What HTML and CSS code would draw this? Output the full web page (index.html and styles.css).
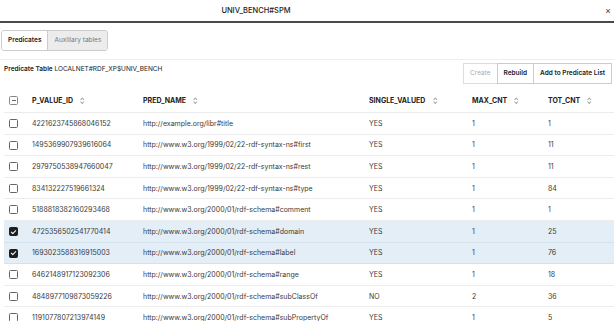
FILE: index.html
```html
<!DOCTYPE html>
<html lang="en">
<head>
    <meta charset="UTF-8">
    <title>UNIV_BENCH#SPM</title>
    <link rel="stylesheet" href="styles.css">
</head>
<body>
    <div class="titlebar">
        <span class="title">UNIV_BENCH#SPM</span>
        <span class="close">&times;</span>
    </div>

    <div class="tabbar">
        <div class="tabs">
            <div class="tab active">Predicates</div>
            <div class="tab">Auxiliary tables</div>
        </div>
    </div>

    <div class="toolbar">
        <div class="table-name"><b>Predicate Table</b> LOCALNET#RDF_XP$UNIV_BENCH</div>
        <div class="actions">
            <div class="btn disabled">Create</div>
            <div class="btn">Rebuild</div>
            <div class="btn">Add to Predicate List</div>
        </div>
    </div>

    <table class="grid">
        <thead>
            <tr>
                <th class="c-check"><span class="box minus"></span></th>
                <th class="c-id">P_VALUE_ID <span class="sort"></span></th>
                <th class="c-name">PRED_NAME <span class="sort"></span></th>
                <th class="c-single">SINGLE_VALUED <span class="sort"></span></th>
                <th class="c-max">MAX_CNT <span class="sort"></span></th>
                <th class="c-tot">TOT_CNT <span class="sort"></span></th>
            </tr>
        </thead>
        <tbody>
            <tr><td class="c-check"><span class="box"></span></td><td>4221623745868046152</td><td>http://example.org/libr#title</td><td>YES</td><td>1</td><td>1</td></tr>
            <tr><td class="c-check"><span class="box"></span></td><td>1495369907939616064</td><td>http://www.w3.org/1999/02/22-rdf-syntax-ns#first</td><td>YES</td><td>1</td><td>11</td></tr>
            <tr><td class="c-check"><span class="box"></span></td><td>2979750538947660047</td><td>http://www.w3.org/1999/02/22-rdf-syntax-ns#rest</td><td>YES</td><td>1</td><td>11</td></tr>
            <tr><td class="c-check"><span class="box"></span></td><td>834132227519661324</td><td>http://www.w3.org/1999/02/22-rdf-syntax-ns#type</td><td>YES</td><td>1</td><td>84</td></tr>
            <tr><td class="c-check"><span class="box"></span></td><td>5188818382160293468</td><td>http://www.w3.org/2000/01/rdf-schema#comment</td><td>YES</td><td>1</td><td>1</td></tr>
            <tr class="selected"><td class="c-check"><span class="box checked"></span></td><td>4725356502541770414</td><td>http://www.w3.org/2000/01/rdf-schema#domain</td><td>YES</td><td>1</td><td>25</td></tr>
            <tr class="selected"><td class="c-check"><span class="box checked"></span></td><td>1693023588316915003</td><td>http://www.w3.org/2000/01/rdf-schema#label</td><td>YES</td><td>1</td><td>76</td></tr>
            <tr><td class="c-check"><span class="box"></span></td><td>6462148917123092306</td><td>http://www.w3.org/2000/01/rdf-schema#range</td><td>YES</td><td>1</td><td>18</td></tr>
            <tr><td class="c-check"><span class="box"></span></td><td>4848977109873059226</td><td>http://www.w3.org/2000/01/rdf-schema#subClassOf</td><td>NO</td><td>2</td><td>36</td></tr>
            <tr><td class="c-check"><span class="box"></span></td><td>1191077807213974149</td><td>http://www.w3.org/2000/01/rdf-schema#subPropertyOf</td><td>YES</td><td>1</td><td>5</td></tr>
        </tbody>
    </table>
</body>
</html>
```

FILE: styles.css
```css
body {
    margin: 0;
    font-family: Inter, "Liberation Sans", sans-serif;
    font-size: 7px;
    color: #3a3a3a;
    background: #fff;
    overflow: hidden;
}

.titlebar {
    position: relative;
    height: 21px;
    line-height: 21px;
    padding-right: 102px;
    text-align: center;
    border-bottom: 2px solid #4a4a4a;
}
.title {
    font-size: 7.5px;
    font-weight: 500;
    color: #222;
}
.close {
    position: absolute;
    right: 3px;
    top: 0;
    font-size: 9px;
    color: #444;
}

.tabbar {
    padding: 7px 0 8px 1px;
    border-bottom: 1px solid #eee;
}
.tabs {
    display: inline-flex;
    border: 1px solid #ccc;
    border-radius: 3px;
    overflow: hidden;
}
.tab {
    height: 19px;
    line-height: 19px;
    padding: 0 6px;
    font-size: 6.5px;
    color: #777;
    background: #ececec;
}
.tab.active {
    background: #fff;
    color: #222;
    font-weight: 600;
    border-right: 1px solid #ccc;
}

.toolbar {
    display: flex;
    justify-content: space-between;
    align-items: flex-start;
    padding: 3px 2px 0 4px;
    height: 25px;
}
.table-name {
    padding-top: 2px;
    font-size: 6.5px;
    color: #222;
}
.table-name b {
    font-weight: 600;
}
.actions {
    display: flex;
}
.btn {
    height: 19px;
    line-height: 19px;
    padding: 0 6px;
    border: 1px solid #ccc;
    margin-left: -1px;
    font-size: 6.5px;
    font-weight: 600;
    color: #222;
    background: #fff;
}
.btn.disabled {
    color: #aaa;
    font-weight: 400;
    border-color: #ddd;
}

.grid {
    margin-left: 4px;
    width: 610px;
    border-collapse: collapse;
    table-layout: fixed;
}
.grid th, .grid td {
    height: 20.6px;
    padding: 0;
    text-align: left;
    white-space: nowrap;
    overflow: hidden;
    border-bottom: 1px solid #ececec;
}
.grid thead th {
    height: 24px;
    font-weight: 700;
    color: #222;
    font-size: 7px;
}
.grid tr.selected td {
    background: #e3eef7;
    border-bottom-color: #d4e2ee;
}
.c-check { width: 28px; }
.c-id { width: 111px; }
.c-name { width: 226px; }
.c-single { width: 103px; }
.c-max { width: 76px; }

.box {
    display: inline-block;
    width: 7px;
    height: 7px;
    margin-left: 5px;
    border: 1px solid #666;
    border-radius: 1.5px;
    vertical-align: middle;
    position: relative;
    background: #fff;
}
.box.checked {
    background: #1f1f1f;
    border-color: #1f1f1f;
}
.box.checked::after {
    content: "";
    position: absolute;
    left: 2px;
    top: 0.5px;
    width: 2px;
    height: 4px;
    border: solid #fff;
    border-width: 0 1px 1px 0;
    transform: rotate(45deg);
}
.box.minus {
    border-color: #888;
}
.box.minus::after {
    content: "";
    position: absolute;
    left: 1.5px;
    top: 3px;
    width: 4px;
    height: 1px;
    background: #666;
}

.sort {
    display: inline-block;
    width: 5px;
    height: 7px;
    margin-left: 5px;
    vertical-align: middle;
    position: relative;
}
.sort::before, .sort::after {
    content: "";
    position: absolute;
    left: 1.5px;
    width: 1.5px;
    height: 1.5px;
    border: solid #aaa;
    border-width: 1px 0 0 1px;
}
.sort::before {
    top: 1px;
    transform: rotate(45deg);
}
.sort::after {
    top: 3.5px;
    transform: rotate(225deg);
}
```
